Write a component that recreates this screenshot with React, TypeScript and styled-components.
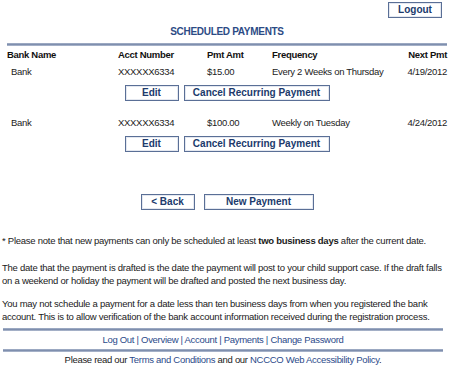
import React from "react";
import styled, { createGlobalStyle } from "styled-components";

const Global = createGlobalStyle`
  html, body { margin: 0; padding: 0; background: #fff; }
  body { font-family: "Liberation Sans", Arial, sans-serif; font-size: 9.5px; letter-spacing: -0.3px; color: #1a1a1a; }
`;

const Page = styled.div`
  width: 450px;
  box-sizing: border-box;
  padding: 2px 3px 0 7px;
`;

const TopBar = styled.div`
  display: flex;
  justify-content: flex-end;
  padding-right: 5px;
`;

const Btn = styled.button<{ $w: number }>`
  width: ${(p) => p.$w}px;
  height: 16px;
  box-sizing: border-box;
  padding: 0;
  background: #fff;
  border: 1px solid #5a6f96;
  box-shadow: inset 0 0 0 1px #e4e8f0;
  font-family: "Liberation Sans", Arial, sans-serif;
  font-weight: bold;
  font-size: 10px;
  letter-spacing: 0;
  line-height: 14px;
  color: #203a6c;
  cursor: pointer;
`;

const Title = styled.div`
  text-align: center;
  font-weight: bold;
  font-size: 10px;
  color: #2c4b85;
  margin-top: 7px;
  line-height: 14px;
`;

const Rule = styled.div<{ $mt: number }>`
  height: 3px;
  margin-top: ${(p) => p.$mt}px;
  background: linear-gradient(#a9b5cb, #7f8fae 50%, #b6c0d3);
`;

const Row = styled.div<{ $head?: boolean; $mt: number }>`
  display: grid;
  grid-template-columns: 111px 89px 65px 1fr auto;
  margin-top: ${(p) => p.$mt}px;
  line-height: 13px;
  font-weight: ${(p) => (p.$head ? "bold" : "normal")};
  color: ${(p) => (p.$head ? "#111" : "#222")};
`;

const Cell = styled.div<{ $indent?: boolean; $right?: boolean }>`
  padding-left: ${(p) => (p.$indent ? 4 : 0)}px;
  text-align: ${(p) => (p.$right ? "right" : "left")};
  white-space: nowrap;
`;

const BtnRow = styled.div<{ $mt: number; $gap: number }>`
  display: flex;
  justify-content: center;
  gap: ${(p) => p.$gap}px;
  margin-top: ${(p) => p.$mt}px;
`;

const Notes = styled.div`
  margin-top: 24px;
  margin-left: -5px;
  line-height: 13px;
  letter-spacing: -0.25px;
  color: #1a1a1a;
`;

const Para = styled.p<{ $mt: number }>`
  margin: ${(p) => p.$mt}px 0 0 0;
`;

const Footer = styled.div`
  margin-left: -4px;
  margin-right: 4px;
`;

const Links = styled.div`
  text-align: center;
  line-height: 13px;
  margin-top: 2px;
  color: #2b4a8a;
`;

const Link = styled.a`
  color: #2b4a8a;
  text-decoration: none;
`;

const Credit = styled.div`
  text-align: center;
  line-height: 13px;
  margin-top: 1px;
  color: #1a1a1a;
`;

const payments = [
  { bank: "Bank", acct: "XXXXXX6334", amt: "$15.00", freq: "Every 2 Weeks on Thursday", next: "4/19/2012" },
  { bank: "Bank", acct: "XXXXXX6334", amt: "$100.00", freq: "Weekly on Tuesday", next: "4/24/2012" },
];

export default function App() {
  return (
    <>
      <Global />
      <Page>
        <TopBar>
          <Btn $w={54}>Logout</Btn>
        </TopBar>
        <Title>SCHEDULED PAYMENTS</Title>
        <Rule $mt={4} />
        <Row $head $mt={2}>
          <Cell>Bank Name</Cell>
          <Cell>Acct Number</Cell>
          <Cell>Pmt Amt</Cell>
          <Cell>Frequency</Cell>
          <Cell $right>Next Pmt</Cell>
        </Row>
        {payments.map((p, i) => (
          <React.Fragment key={i}>
            <Row $mt={i === 0 ? 4 : 15}>
              <Cell $indent>{p.bank}</Cell>
              <Cell>{p.acct}</Cell>
              <Cell>{p.amt}</Cell>
              <Cell>{p.freq}</Cell>
              <Cell $right>{p.next}</Cell>
            </Row>
            <BtnRow $mt={7} $gap={5}>
              <Btn $w={54}>Edit</Btn>
              <Btn $w={146}>Cancel Recurring Payment</Btn>
            </BtnRow>
          </React.Fragment>
        ))}
        <BtnRow $mt={42} $gap={9}>
          <Btn $w={54}>&lt; Back</Btn>
          <Btn $w={110}>New Payment</Btn>
        </BtnRow>
        <Notes>
          <Para $mt={0}>
            * Please note that new payments can only be scheduled at least <b>two business days</b> after the current date.
          </Para>
          <Para $mt={14}>
            The date that the payment is drafted is the date the payment will post to your child support case. If the draft falls on a weekend or holiday the payment will be drafted and posted the next business day.
          </Para>
          <Para $mt={10}>
            You may not schedule a payment for a date less than ten business days from when you registered the bank account. This is to allow verification of the bank account information received during the registration process.
          </Para>
        </Notes>
        <Footer>
          <Rule $mt={5} />
          <Links>
            <Link href="#">Log Out</Link> | <Link href="#">Overview</Link> | <Link href="#">Account</Link> |{" "}
            <Link href="#">Payments</Link> | <Link href="#">Change Password</Link>
          </Links>
          <Rule $mt={3} />
          <Credit>
            Please read our <Link href="#">Terms and Conditions</Link> and our{" "}
            <Link href="#">NCCCO Web Accessibility Policy</Link>.
          </Credit>
        </Footer>
      </Page>
    </>
  );
}
